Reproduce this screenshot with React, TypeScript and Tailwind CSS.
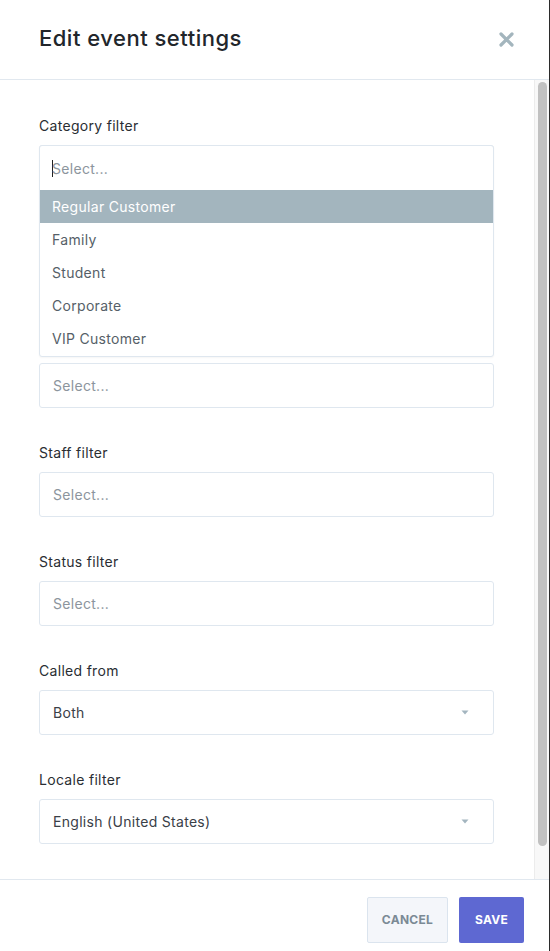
import React from 'react';

const font = { fontFamily: 'Inter, "Noto Sans", sans-serif' };

type Field = { label: string; value?: string; select?: boolean; hidden?: 'all' | 'label' };

const fields: Field[] = [
    { label: 'Category filter' },
    { label: 'Service filter', hidden: 'all' },
    { label: 'Location filter', hidden: 'label' },
    { label: 'Staff filter' },
    { label: 'Status filter' },
    { label: 'Called from', value: 'Both', select: true },
    { label: 'Locale filter', value: 'English (United States)', select: true },
];

const options = ['Regular Customer', 'Family', 'Student', 'Corporate', 'VIP Customer'];

const Caret = () => (
    <svg width="8" height="5" viewBox="0 0 8 5" className="mr-6">
        <path d="M0.5 0.5 H7.5 L4 4.5 Z" fill="#a3b5bf" />
    </svg>
);

export default function App() {
    return (
        <div style={font} className="w-[550px] h-[951px] bg-white flex flex-col border-r border-[#2b2b2b] overflow-hidden">
            {/* header */}
            <div className="h-[80px] shrink-0 flex items-center justify-between pl-[39px] pr-[35px] border-b border-[#e1e8ef]">
                <h1 className="text-[22px] font-medium text-[#22262b] tracking-[0.5px] mt-[-2px]">Edit event settings</h1>
                <svg width="15" height="15" viewBox="0 0 15 15">
                    <path d="M2 2 L13 13 M13 2 L2 13" stroke="#a3b5bd" strokeWidth="3.2" strokeLinecap="round" />
                </svg>
            </div>

            {/* body */}
            <div className="flex-1 flex min-h-0">
                <div className="flex-1 relative overflow-hidden pt-[36px] pl-[39px] pr-[40px]">
                    {fields.map((f, i) => (
                        <div key={i} className={`mb-[35px] ${f.hidden === 'all' ? 'invisible' : ''}`}>
                            <div className={`text-[14px] leading-5 text-[#2a2e33] tracking-[0.3px] mb-[9px] ${f.hidden === 'label' ? 'invisible' : ''}`}>
                                {f.label}
                            </div>
                            <div className="h-[45px] border border-[#dfe7ef] rounded-[3px] flex items-center justify-between pl-[13px]">
                                <span className={`text-[14px] tracking-[0.3px] ${f.value ? 'text-[#3a4047]' : 'text-[#8c959d]'}`}>
                                    {f.value ?? 'Select...'}
                                </span>
                                {f.select && <Caret />}
                            </div>
                        </div>
                    ))}

                    {/* open dropdown */}
                    <div className="absolute left-[39px] right-[40px] top-[65px] bg-white border border-[#dfe7ef] rounded-[3px] shadow-[0_1px_2px_rgba(0,0,0,0.04)]">
                        <div className="h-[44px] flex items-center pl-[12px]">
                            <span className="w-px h-[17px] bg-[#222] mr-[-1px]" />
                            <span className="text-[14px] tracking-[0.3px] text-[#8c959d]">Select...</span>
                        </div>
                        {options.map((o, i) => (
                            <div
                                key={o}
                                className={`h-[33px] flex items-center pl-[12px] text-[14px] tracking-[0.3px] ${i === 0 ? 'bg-[#a3b5be] text-white' : 'text-[#565f68]'}`}
                            >
                                {o}
                            </div>
                        ))}
                        <div className="h-[1px]" />
                    </div>
                </div>

                {/* scrollbar */}
                <div className="w-[15px] shrink-0 bg-[#f8f8f8] border-l border-[#ececec] pt-[2px] pb-[33px] pl-[3px] pr-[2px] flex">
                    <div className="flex-1 bg-[#c1c1c1] rounded-full" />
                </div>
            </div>

            {/* footer */}
            <div className="h-[72px] shrink-0 border-t border-[#e1e8ef] flex items-start justify-end gap-[11px] pt-[17px] pr-[25px]">
                <button className="w-[81px] h-[46px] bg-[#f4f6fa] border border-[#dbe4ee] rounded-[2px] text-[12px] font-bold text-[#7b8a95] tracking-[0.3px]">
                    CANCEL
                </button>
                <button className="w-[65px] h-[46px] bg-[#5e68d2] rounded-[2px] text-[12px] font-bold text-white tracking-[0.3px]">
                    SAVE
                </button>
            </div>
        </div>
    );
}
